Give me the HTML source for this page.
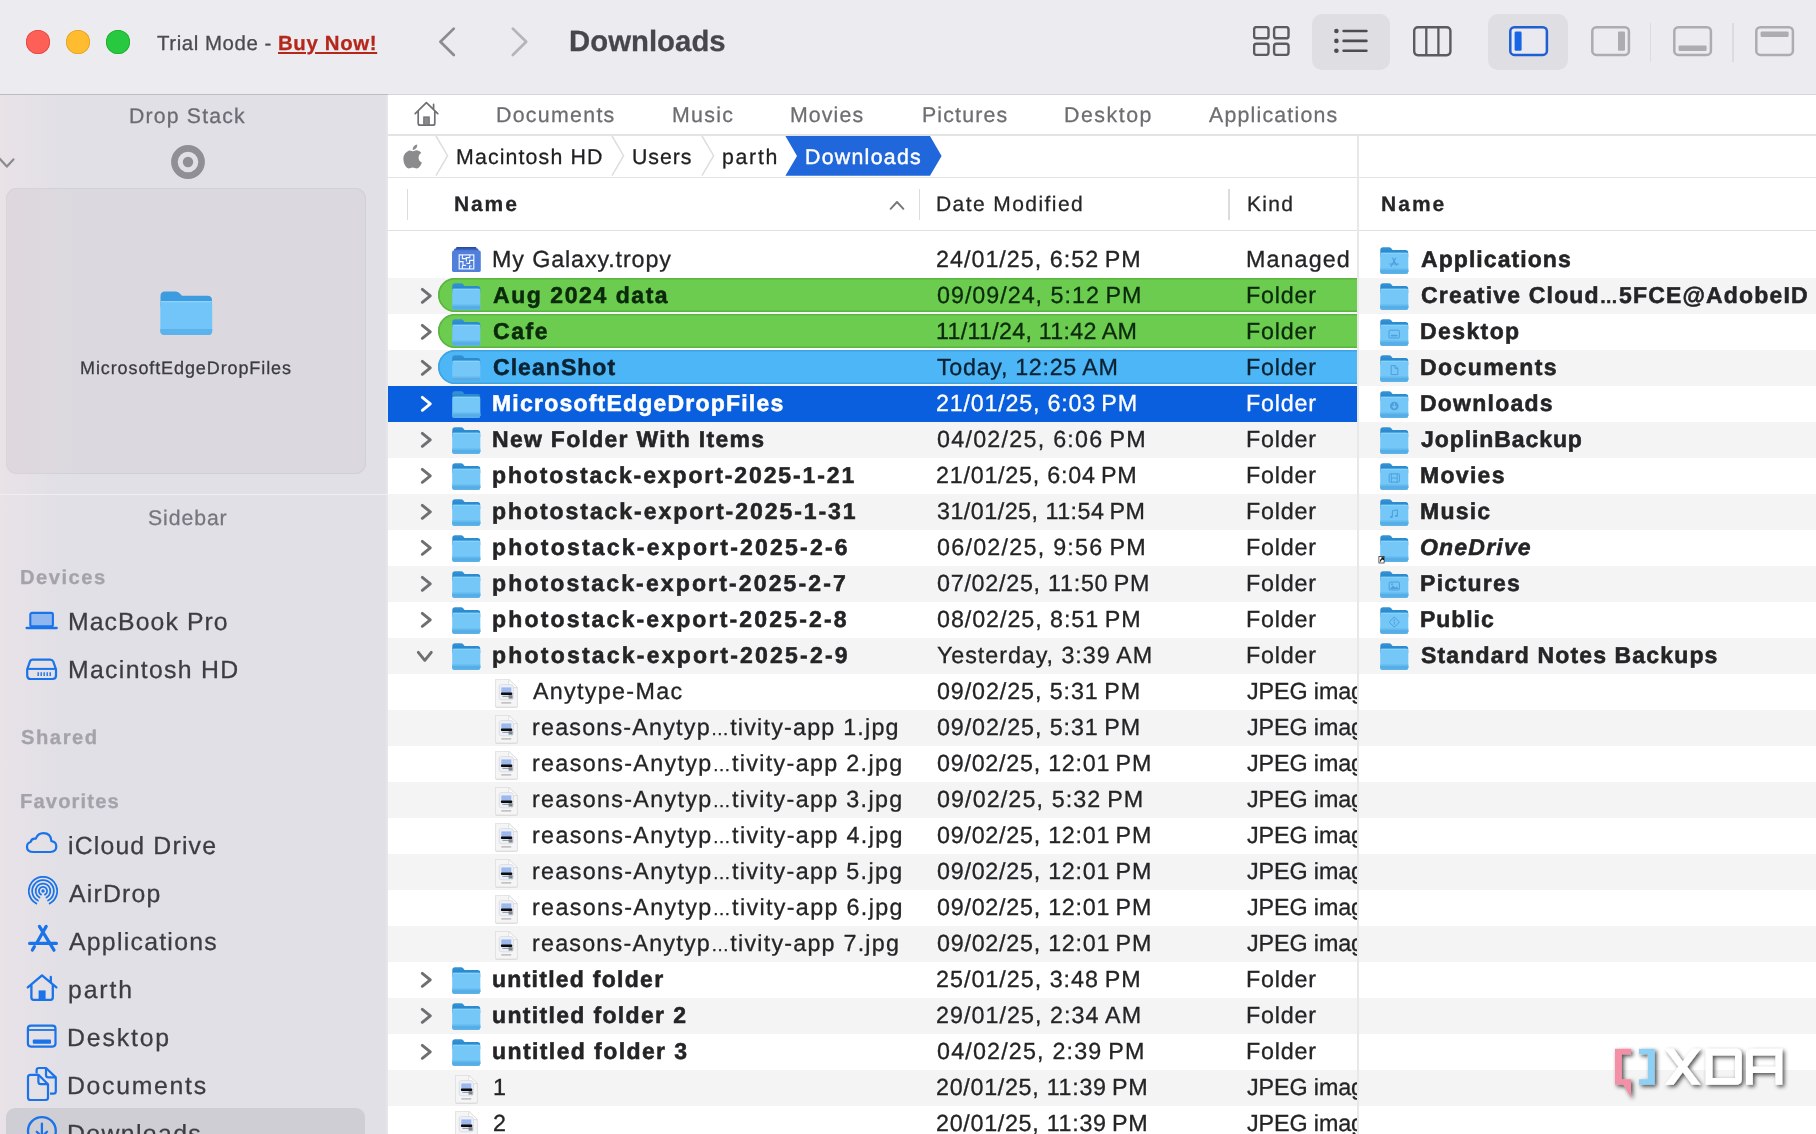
<!DOCTYPE html>
<html lang="en"><head><meta charset="utf-8"><title>Downloads</title>
<style>html,body{margin:0;padding:0;}body{width:1816px;height:1134px;overflow:hidden;position:relative;background:#fff;font-family:"Liberation Sans",sans-serif;}#app{position:absolute;left:0;top:0;width:1816px;height:1134px;overflow:hidden;will-change:transform;}.b{position:absolute;display:block;}.t{position:absolute;white-space:pre;line-height:1;font-family:"Liberation Sans",sans-serif;-webkit-text-stroke-width:.28px;transform:rotate(0.03deg);}</style></head>
<body>
<div id="app">
<svg class="b" width="0" height="0" style="left:0;top:0"><defs><linearGradient id="fb" x1="0" y1="0" x2="0" y2="1"><stop offset="0" stop-color="#3593d6"/><stop offset="1" stop-color="#1f80c6"/></linearGradient></defs></svg>
<div class="b" style="left:0px;top:0px;width:1816px;height:94px;background:#ecebf0;"></div>
<div class="b" style="left:0px;top:94px;width:388px;height:1px;background:#bdbcc4;"></div>
<div class="b" style="left:388px;top:94px;width:1428px;height:1px;background:#d5d4da;"></div>
<div class="b" style="left:0px;top:95px;width:388px;height:1039px;background:#e1e0e6;"></div>
<div class="b" style="left:386px;top:95px;width:2px;height:1039px;background:#e6e5ea;"></div>
<div class="b" style="left:25.8px;top:29.8px;width:24.4px;height:24.4px;background:#fe5f57;border-radius:50%;box-shadow:inset 0 0 0 0.8px #e0443e;"></div>
<div class="b" style="left:65.8px;top:29.8px;width:24.4px;height:24.4px;background:#febc2e;border-radius:50%;box-shadow:inset 0 0 0 0.8px #dea123;"></div>
<div class="b" style="left:105.8px;top:29.8px;width:24.4px;height:24.4px;background:#28c840;border-radius:50%;box-shadow:inset 0 0 0 0.8px #1aab29;"></div>
<span class="t" style="left:157.40px;top:32.79px;font-size:20.4px;letter-spacing:0.58px;color:#4a4a4f;">Trial Mode -</span>
<span class="t" style="left:278.00px;top:32.79px;font-size:20.4px;font-weight:700;letter-spacing:0.65px;color:#b5271b;text-decoration:underline;text-decoration-thickness:2px;text-underline-offset:2px;">Buy Now!</span>
<svg class="b" style="left:436px;top:24px;" width="24" height="36" viewBox="0 0 24 36"><path d="M17.8 4.6 L4.4 17.8 L17.8 31" fill="none" stroke="#8b8b90" stroke-width="2.7" stroke-linecap="round" stroke-linejoin="round"/></svg>
<svg class="b" style="left:508px;top:24px;" width="24" height="36" viewBox="0 0 24 36"><path d="M4.8 4.6 L18.2 17.8 L4.8 31" fill="none" stroke="#b4b4b9" stroke-width="2.7" stroke-linecap="round" stroke-linejoin="round"/></svg>
<span class="t" style="left:568.90px;top:26.49px;font-size:29.3px;font-weight:700;letter-spacing:0.05px;color:#47464d;">Downloads</span>
<div class="b" style="left:1312px;top:14px;width:78px;height:55.5px;background:#dfdee3;border-radius:10px;"></div>
<div class="b" style="left:1488px;top:13.5px;width:80px;height:56.5px;background:#dfdee3;border-radius:10px;"></div>
<svg class="b" style="left:1253px;top:26px;" width="37" height="30" viewBox="0 0 37 30"><rect x="1.1" y="1.1" width="14.4" height="11.2" rx="2.4" fill="none" stroke="#5b5b60" stroke-width="2.4"/><rect x="1.1" y="17.7" width="14.4" height="11.2" rx="2.4" fill="none" stroke="#5b5b60" stroke-width="2.4"/><rect x="21.1" y="1.1" width="14.4" height="11.2" rx="2.4" fill="none" stroke="#5b5b60" stroke-width="2.4"/><rect x="21.1" y="17.7" width="14.4" height="11.2" rx="2.4" fill="none" stroke="#5b5b60" stroke-width="2.4"/></svg>
<svg class="b" style="left:1333.8px;top:28px;" width="35" height="26" viewBox="0 0 35 26"><circle cx="2.4" cy="3" r="2.3" fill="#4c4c51"/><path d="M9.6 3 H32.4" stroke="#4c4c51" stroke-width="2.6" stroke-linecap="round"/><circle cx="2.4" cy="12.9" r="2.3" fill="#4c4c51"/><path d="M9.6 12.9 H32.4" stroke="#4c4c51" stroke-width="2.6" stroke-linecap="round"/><circle cx="2.4" cy="22.8" r="2.3" fill="#4c4c51"/><path d="M9.6 22.8 H32.4" stroke="#4c4c51" stroke-width="2.6" stroke-linecap="round"/></svg>
<svg class="b" style="left:1413px;top:25.5px;" width="39" height="31" viewBox="0 0 39 31"><rect x="1.2" y="1.2" width="36.2" height="28" rx="3.6" fill="none" stroke="#5b5b60" stroke-width="2.4"/><path d="M13.3 1.2 V29.2 M25.4 1.2 V29.2" stroke="#5b5b60" stroke-width="2.3"/></svg>
<svg class="b" style="left:1508.5px;top:25.5px;" width="40" height="31" viewBox="0 0 40 31"><rect x="1.3" y="1.3" width="36.6" height="27.6" rx="4" fill="#e9e9ef" stroke="#1f5fd2" stroke-width="2.5"/><rect x="5.6" y="5.5" width="7" height="19.3" rx="1.4" fill="#1766e6"/></svg>
<svg class="b" style="left:1590.5px;top:25.5px;" width="40" height="31" viewBox="0 0 40 31"><rect x="1.3" y="1.3" width="36.6" height="27.6" rx="4" fill="#ecebf0" stroke="#acacb1" stroke-width="2.5"/><rect x="27" y="5.5" width="7" height="19.3" rx="1.2" fill="#acacb1"/></svg>
<div class="b" style="left:1650px;top:23px;width:1.3px;height:39px;background:#dcdbe0;"></div>
<svg class="b" style="left:1672.5px;top:25.5px;" width="40" height="31" viewBox="0 0 40 31"><rect x="1.3" y="1.3" width="36.6" height="27.6" rx="4" fill="#ecebf0" stroke="#acacb1" stroke-width="2.5"/><rect x="5.6" y="19.4" width="28" height="5.6" rx="1.2" fill="#acacb1"/></svg>
<div class="b" style="left:1732.3px;top:23px;width:1.3px;height:39px;background:#dcdbe0;"></div>
<svg class="b" style="left:1754.5px;top:25.5px;" width="40" height="31" viewBox="0 0 40 31"><rect x="1.3" y="1.3" width="36.6" height="27.6" rx="4" fill="#ecebf0" stroke="#acacb1" stroke-width="2.5"/><rect x="5.6" y="5.4" width="28" height="5.6" rx="1.2" fill="#acacb1"/></svg>
<div class="b" style="left:0px;top:95px;width:60px;height:1039px;background:linear-gradient(90deg,rgba(238,228,232,.6),rgba(225,224,230,0));"></div>
<span class="t" style="left:128.70px;top:104.69px;font-size:21.2px;letter-spacing:1.20px;color:#6c6b73;">Drop Stack</span>
<svg class="b" style="left:0px;top:154px;" width="18" height="18" viewBox="0 0 18 18"><path d="M-0.5 4.6 L6.9 12.6 L13.4 5.4" fill="none" stroke="#8a8a8f" stroke-width="2.2" stroke-linecap="round" stroke-linejoin="round"/></svg>
<svg class="b" style="left:170px;top:144px;" width="36" height="36" viewBox="0 0 36 36"><circle cx="18" cy="18" r="13.6" fill="none" stroke="#8f8f94" stroke-width="6.6"/><circle cx="18" cy="18" r="5.2" fill="#8f8f94"/></svg>
<div class="b" style="left:6px;top:187.5px;width:359.5px;height:286px;background:#dbd9df;border-radius:11px;box-shadow:inset 0 0 0 1px #d2d0d7;"></div>
<div class="b" style="left:6px;top:187.5px;width:70px;height:286px;background:linear-gradient(90deg,rgba(226,214,220,.5),rgba(219,217,223,0));border-radius:11px 0 0 11px;"></div>
<svg class="b" style="left:160px;top:291px;" width="53" height="45" viewBox="0 0 53 45"><path d="M0.5 5 Q0.5 0.5 5 0.5 H15.5 Q18 0.5 19.6 2.2 L22 4.8 H47.5 Q52 4.8 52 9.3 V16 H0.5Z" fill="#3d9cdf"/><path d="M0.3 14 Q0.3 10 4.3 10 H48.2 Q52.2 10 52.2 14 V40 Q52.2 44 48.2 44 H4.3 Q0.3 44 0.3 40Z" fill="#72c5f8"/><path d="M0.3 38 H52.2 V40 Q52.2 44 48.2 44 H4.3 Q0.3 44 0.3 40Z" fill="#5cb2ea"/><rect x="0.3" y="10" width="51.9" height="1.3" rx=".6" fill="#8fd3fb"/></svg>
<span class="t" style="left:79.50px;top:358.89px;font-size:18px;letter-spacing:0.90px;color:#3b3b42;">MicrosoftEdgeDropFiles</span>
<div class="b" style="left:0px;top:494px;width:388px;height:1px;background:#efeef2;"></div>
<span class="t" style="left:147.60px;top:506.89px;font-size:21.2px;letter-spacing:0.94px;color:#77767e;">Sidebar</span>
<span class="t" style="left:20.00px;top:567.49px;font-size:20.2px;font-weight:700;letter-spacing:1.48px;color:#a4a3ab;">Devices</span>
<span class="t" style="left:21.00px;top:727.49px;font-size:20.2px;font-weight:700;letter-spacing:1.54px;color:#a4a3ab;">Shared</span>
<span class="t" style="left:20.00px;top:790.89px;font-size:20.2px;font-weight:700;letter-spacing:1.12px;color:#a4a3ab;">Favorites</span>
<span class="t" style="left:67.70px;top:610.09px;font-size:24.8px;letter-spacing:1.08px;color:#3c3c43;">MacBook Pro</span>
<span class="t" style="left:67.70px;top:658.09px;font-size:24.8px;letter-spacing:1.32px;color:#3c3c43;">Macintosh HD</span>
<div class="b" style="left:6.2px;top:1107.8px;width:359.2px;height:40px;background:#cfced5;border-radius:9px;"></div>
<span class="t" style="left:67.70px;top:834.29px;font-size:24.8px;letter-spacing:1.17px;color:#3c3c43;">iCloud Drive</span>
<span class="t" style="left:68.70px;top:882.29px;font-size:24.8px;letter-spacing:1.21px;color:#3c3c43;">AirDrop</span>
<span class="t" style="left:68.70px;top:930.29px;font-size:24.8px;letter-spacing:1.27px;color:#3c3c43;">Applications</span>
<span class="t" style="left:67.70px;top:978.29px;font-size:24.8px;letter-spacing:1.89px;color:#3c3c43;">parth</span>
<span class="t" style="left:66.70px;top:1026.29px;font-size:24.8px;letter-spacing:1.85px;color:#3c3c43;">Desktop</span>
<span class="t" style="left:66.70px;top:1074.29px;font-size:24.8px;letter-spacing:1.71px;color:#3c3c43;">Documents</span>
<span class="t" style="left:66.70px;top:1122.29px;font-size:24.8px;letter-spacing:1.38px;color:#3c3c43;">Downloads</span>
<svg class="b" style="left:25px;top:610px;" width="34" height="21" viewBox="0 0 34 21"><rect x="5.3" y="2.9" width="22.6" height="13.4" rx="1.6" fill="#8fb6ef" stroke="#1a73e8" stroke-width="2.1"/><path d="M1.6 18 H31.7" stroke="#1a73e8" stroke-width="2.3" stroke-linecap="round"/></svg>
<svg class="b" style="left:26px;top:656.5px;" width="32" height="25" viewBox="0 0 32 25"><path d="M6.8 2.6 H24.2 Q26.4 2.6 27.3 4.6 L30 12.4 V18.6 Q30 22 26.6 22 H4.6 Q1.2 22 1.2 18.6 V12.4 L3.9 4.6 Q4.6 2.6 6.8 2.6Z" fill="none" stroke="#1a73e8" stroke-width="2.2" stroke-linejoin="round"/><path d="M1.8 11.9 H29.4" stroke="#1a73e8" stroke-width="2"/><path d="M12.2 15.2 V19 M15.2 15.2 V19 M18.2 15.2 V19 M21.2 15.2 V19 M24.2 15.2 V19" stroke="#1a73e8" stroke-width="1.4"/></svg>
<svg class="b" style="left:24px;top:829px;" width="36" height="27" viewBox="0 0 36 27"><path d="M9.6 23 H26.4 Q32.3 23 32.3 17.6 Q32.3 12.8 27.4 12.2 Q26.9 4.2 19.4 4.2 Q13.9 4.2 11.8 9.6 Q7.4 9 6.6 13 Q3 13.6 3 18 Q3 23 9.6 23Z" fill="none" stroke="#1a73e8" stroke-width="2.2" stroke-linejoin="round"/></svg>
<svg class="b" style="left:27.9px;top:876.4px;" width="30" height="30" viewBox="0 0 30 30"><path d="M13.08 18.62 A4.1 4.1 0 1 1 16.92 18.62" fill="none" stroke="#1a73e8" stroke-width="1.75" stroke-linecap="round"/><path d="M11.53 21.53 A7.4 7.4 0 1 1 18.47 21.53" fill="none" stroke="#1a73e8" stroke-width="1.75" stroke-linecap="round"/><path d="M9.93 24.54 A10.8 10.8 0 1 1 20.07 24.54" fill="none" stroke="#1a73e8" stroke-width="1.75" stroke-linecap="round"/><path d="M8.34 27.54 A14.2 14.2 0 1 1 21.66 27.54" fill="none" stroke="#1a73e8" stroke-width="1.75" stroke-linecap="round"/><circle cx="15" cy="15" r="1.7" fill="#1a73e8"/></svg>
<svg class="b" style="left:26px;top:923px;" width="34" height="31" viewBox="0 0 34 31"><path d="M20.2 3.4 L10.7 20 M8.4 23.6 L6.4 27 M13.4 3.4 L28 27.2 M3.6 20.4 H30.4" fill="none" stroke="#1a73e8" stroke-width="3.2" stroke-linecap="round"/></svg>
<svg class="b" style="left:25px;top:972px;" width="35" height="31" viewBox="0 0 35 31"><path d="M2.8 15.4 L17 3.4 L31.4 15.4 M25.8 10.6 V5 M6.4 13 V25.6 Q6.4 27.8 8.6 27.8 H25.6 Q27.8 27.8 27.8 25.6 V13" fill="none" stroke="#1a73e8" stroke-width="2.3" stroke-linecap="round" stroke-linejoin="round"/><rect x="13.6" y="18.4" width="7" height="9.4" fill="#1a73e8"/></svg>
<svg class="b" style="left:25px;top:1023px;" width="34" height="27" viewBox="0 0 34 27"><rect x="2.9" y="2.7" width="27.6" height="20.9" rx="3" fill="none" stroke="#1a73e8" stroke-width="2.2"/><path d="M3 7 H30.4" stroke="#1a73e8" stroke-width="1.8"/><rect x="7.8" y="16.6" width="18.2" height="4.2" rx="1" fill="#1a73e8"/></svg>
<svg class="b" style="left:25px;top:1064.5px;" width="34" height="38" viewBox="0 0 34 38"><path d="M11.6 8.5 V5.4 Q11.6 3 14 3 H21 L30.8 12.4 V26.2 Q30.8 28.6 28.4 28.6 H25" fill="none" stroke="#1a73e8" stroke-width="2.2" stroke-linejoin="round"/><path d="M21 3 V10 Q21 12.4 23.4 12.4 H30.8" fill="none" stroke="#1a73e8" stroke-width="2.2"/><path d="M5.4 9.8 H13.4 L23 19.2 V32.6 Q23 35 20.6 35 H5.4 Q3 35 3 32.6 V12.2 Q3 9.8 5.4 9.8Z" fill="none" stroke="#1a73e8" stroke-width="2.2" stroke-linejoin="round"/><path d="M13.4 9.8 V16.8 Q13.4 19.2 15.8 19.2 H23" fill="none" stroke="#1a73e8" stroke-width="2.2"/></svg>
<svg class="b" style="left:25px;top:1114px;" width="34" height="22" viewBox="0 0 34 22"><circle cx="16.9" cy="17" r="13.9" fill="none" stroke="#1a73e8" stroke-width="2.3"/><path d="M16.9 9.6 V22 M11.8 17.8 L16.9 22.8 L22 17.8" fill="none" stroke="#1a73e8" stroke-width="2.3" stroke-linecap="round" stroke-linejoin="round"/></svg>
<div class="b" style="left:388px;top:95px;width:1428px;height:1039px;background:#ffffff;z-index:-1;"></div>
<svg class="b" style="left:413px;top:100px;" width="27" height="28" viewBox="0 0 27 28"><path d="M2.2 13.6 L13.4 2.6 L24.8 13.6 M20.6 9.2 V4.4 M5.2 11.4 V23.2 Q5.2 25.2 7.2 25.2 H19.8 Q21.8 25.2 21.8 23.2 V11.4" fill="none" stroke="#707074" stroke-width="1.7" stroke-linecap="round" stroke-linejoin="round"/><rect x="10.8" y="17" width="5.4" height="8" fill="#8a8a8e" stroke="#707074" stroke-width="1.2"/></svg>
<span class="t" style="left:496.00px;top:104.59px;font-size:21.3px;letter-spacing:1.32px;color:#6d6d72;">Documents</span>
<span class="t" style="left:672.00px;top:104.59px;font-size:21.3px;letter-spacing:1.31px;color:#6d6d72;">Music</span>
<span class="t" style="left:790.00px;top:104.59px;font-size:21.3px;letter-spacing:1.12px;color:#6d6d72;">Movies</span>
<span class="t" style="left:922.00px;top:104.59px;font-size:21.3px;letter-spacing:1.17px;color:#6d6d72;">Pictures</span>
<span class="t" style="left:1063.50px;top:104.59px;font-size:21.3px;letter-spacing:1.54px;color:#6d6d72;">Desktop</span>
<span class="t" style="left:1209.00px;top:104.59px;font-size:21.3px;letter-spacing:1.21px;color:#6d6d72;">Applications</span>
<div class="b" style="left:388px;top:134px;width:1428px;height:1.6px;background:#e3e3e4;"></div>
<svg class="b" style="left:402px;top:143.5px;" width="22" height="26" viewBox="0 0 22 26"><path d="M15.6 1 Q15.9 3.4 14.4 5.2 Q12.9 7 10.8 6.9 Q10.5 4.7 12 3 Q13.5 1.3 15.6 1Z M10.9 8.2 Q12.2 8.2 14.2 7.3 Q17.9 6.9 19.9 10 Q16.9 11.9 17 15.2 Q17.1 18.8 20.6 20.3 Q19.7 22.8 18.3 24.6 Q16.8 26.6 15.1 26.6 Q13.8 26.6 12.9 26.1 Q11.8 25.6 10.8 25.6 Q9.7 25.6 8.6 26.1 Q7.6 26.6 6.8 26.6 Q5 26.6 3.2 24.2 Q0.8 20.9 0.8 16.6 Q0.8 12.7 2.8 10.4 Q4.6 8.3 7 7.4 Q9.2 7.4 10.9 8.2Z" transform="scale(0.94) translate(0.6,-0.6)" fill="#8b8b8d"/></svg>
<svg class="b" style="left:435.3px;top:135px;" width="14" height="42" viewBox="0 0 14 42"><path d="M1 1 L12.6 20.7 L1 40.6" fill="none" stroke="#dedede" stroke-width="1.5"/></svg>
<svg class="b" style="left:611.2px;top:135px;" width="14" height="42" viewBox="0 0 14 42"><path d="M1 1 L12.6 20.7 L1 40.6" fill="none" stroke="#dedede" stroke-width="1.5"/></svg>
<svg class="b" style="left:701.4px;top:135px;" width="14" height="42" viewBox="0 0 14 42"><path d="M1 1 L12.6 20.7 L1 40.6" fill="none" stroke="#dedede" stroke-width="1.5"/></svg>
<span class="t" style="left:456.00px;top:146.59px;font-size:21.3px;letter-spacing:1.15px;color:#1f1f21;">Macintosh HD</span>
<span class="t" style="left:632.20px;top:146.59px;font-size:21.3px;letter-spacing:0.96px;color:#1f1f21;">Users</span>
<span class="t" style="left:721.80px;top:146.59px;font-size:21.3px;letter-spacing:1.70px;color:#1f1f21;">parth</span>
<svg class="b" style="left:785px;top:135.8px;" width="158" height="40" viewBox="0 0 158 40"><path d="M0.4 0 H145 L156.6 19.9 L145 39.8 H0.4 L12 19.9Z" fill="#2067dc"/></svg>
<span class="t" style="left:805.20px;top:146.67px;font-size:21.3px;letter-spacing:1.29px;-webkit-text-stroke-width:0.45px;color:#ffffff;">Downloads</span>
<div class="b" style="left:388px;top:176.8px;width:1428px;height:1.5px;background:#e3e3e4;"></div>
<span class="t" style="left:453.50px;top:193.39px;font-size:21px;font-weight:700;letter-spacing:1.89px;color:#262628;">Name</span>
<span class="t" style="left:936.00px;top:193.29px;font-size:21px;letter-spacing:1.43px;color:#262628;">Date Modified</span>
<span class="t" style="left:1246.70px;top:193.29px;font-size:21px;letter-spacing:1.32px;color:#262628;">Kind</span>
<span class="t" style="left:1381.00px;top:193.39px;font-size:21px;font-weight:700;letter-spacing:2.03px;color:#262628;">Name</span>
<svg class="b" style="left:888px;top:198px;" width="18" height="14" viewBox="0 0 18 14"><path d="M2.6 10.8 L9 4 L15.4 10.8" fill="none" stroke="#77777a" stroke-width="1.9" stroke-linecap="round" stroke-linejoin="round"/></svg>
<div class="b" style="left:406.5px;top:188.5px;width:1.4px;height:31px;background:#dcdcdd;"></div>
<div class="b" style="left:918.7px;top:188.5px;width:1.4px;height:31px;background:#dcdcdd;"></div>
<div class="b" style="left:1228.2px;top:188.5px;width:1.4px;height:31px;background:#dcdcdd;"></div>
<div class="b" style="left:388px;top:229.8px;width:1428px;height:1.6px;background:#e0e0e1;"></div>
<div class="b" style="left:388px;top:278px;width:1428px;height:36px;background:#f4f4f5;"></div>
<div class="b" style="left:388px;top:350px;width:1428px;height:36px;background:#f4f4f5;"></div>
<div class="b" style="left:388px;top:422px;width:1428px;height:36px;background:#f4f4f5;"></div>
<div class="b" style="left:388px;top:494px;width:1428px;height:36px;background:#f4f4f5;"></div>
<div class="b" style="left:388px;top:566px;width:1428px;height:36px;background:#f4f4f5;"></div>
<div class="b" style="left:388px;top:638px;width:1428px;height:36px;background:#f4f4f5;"></div>
<div class="b" style="left:388px;top:710px;width:1428px;height:36px;background:#f4f4f5;"></div>
<div class="b" style="left:388px;top:782px;width:1428px;height:36px;background:#f4f4f5;"></div>
<div class="b" style="left:388px;top:854px;width:1428px;height:36px;background:#f4f4f5;"></div>
<div class="b" style="left:388px;top:926px;width:1428px;height:36px;background:#f4f4f5;"></div>
<div class="b" style="left:388px;top:998px;width:1428px;height:36px;background:#f4f4f5;"></div>
<div class="b" style="left:388px;top:1070px;width:1428px;height:36px;background:#f4f4f5;"></div>
<div class="b" style="left:388px;top:1142px;width:1428px;height:36px;background:#f4f4f5;"></div>
<div class="b" style="left:388px;top:95px;width:969.5px;height:1039px;overflow:hidden;"><div class="b" style="left:-388px;top:-95px;">
<svg class="b" style="left:452.2px;top:246.9px;" width="29" height="25" viewBox="0 0 29 25"><path d="M4 1.2 Q4 0 5.2 0 H23.3 Q24.5 0 24.5 1.2 V4 H4Z" fill="#2b4a9a"/><path d="M2 3 Q2 1.6 3.4 1.6 H25.1 Q26.5 1.6 26.5 3 V6 H2Z" fill="#3c62bd"/><path d="M0 5.6 Q0 3.2 2.4 3.2 H26.4 Q28.8 3.2 28.8 5.6 V23.6 Q28.8 25 27.4 25 H1.4 Q0 25 0 23.6Z" fill="#5080dc"/><g fill="none" stroke="#f4f7ff" stroke-width="1.15"><rect x="7.2" y="7.9" width="14.6" height="14"/><path d="M10.4 7.9 V11.6 H14.2 M17.8 7.9 V10.6 H14.4 V14.6 M21.8 13.4 H17.6 V16.4 H14.4 M7.2 14.6 H11 V18.4 H14.2 M10.4 21.9 V18.6 M17.6 21.9 V19 H19.8"/></g></svg>
<span class="t" style="left:492.30px;top:248.30px;font-size:23.3px;letter-spacing:0.88px;-webkit-text-stroke-width:0.3px;color:#242426;">My Galaxy.tropy</span>
<span class="t" style="left:936.20px;top:248.30px;font-size:23.3px;letter-spacing:1.01px;-webkit-text-stroke-width:0.3px;color:#242426;">24/01/25, 6:52 PM</span>
<span class="t" style="left:1246.20px;top:248.30px;font-size:23.3px;letter-spacing:1.10px;-webkit-text-stroke-width:0.3px;color:#242426;">Managed</span>
<div class="b" style="left:438px;top:278px;width:940px;height:33.6px;background:#6ccc4f;border-radius:17px;box-shadow:inset 0 0 0 1.6px #5ab540;"></div>
<svg class="b" style="left:419px;top:285.8px;" width="15" height="20" viewBox="0 0 15 20"><path d="M3.3 3.3 L11.3 9.8 L3.3 16.3" fill="none" stroke="#6f6f72" stroke-width="2.9" stroke-linecap="round" stroke-linejoin="round"/></svg>
<svg class="b" style="left:451.6px;top:283.0px;overflow:visible;" width="28.5" height="28.5" viewBox="0 0 28.5 28.5"><path d="M0.3 3 Q0.3 0.2 3.1 0.2 H9 Q10.4 0.2 11.2 1.3 L12.6 3 H25.6 Q28.2 3 28.2 5.6 V10 H0.3Z" fill="url(#fb)"/><path d="M0.2 7.9 Q0.2 5.7 2.4 5.7 H26.1 Q28.3 5.7 28.3 7.9 V24.6 Q28.3 26.8 26.1 26.8 H2.4 Q0.2 26.8 0.2 24.6Z" fill="#74c7f7"/><path d="M0.2 21.4 H28.3 V24.6 Q28.3 26.8 26.1 26.8 H2.4 Q0.2 26.8 0.2 24.6Z" fill="#63baee"/><path d="M0.2 23 H28.3 V24.6 Q28.3 26.8 26.1 26.8 H2.4 Q0.2 26.8 0.2 24.6Z" fill="#57aee6"/><rect x="0.5" y="5.7" width="27.5" height="1" rx="0.5" fill="#8dd6fb"/></svg>
<span class="t" style="left:492.80px;top:284.42px;font-size:23.0px;font-weight:700;letter-spacing:1.56px;-webkit-text-stroke-width:0.55px;color:#0b2a0c;">Aug 2024 data</span>
<span class="t" style="left:937.20px;top:284.30px;font-size:23.3px;letter-spacing:0.99px;-webkit-text-stroke-width:0.3px;color:#0b2a0c;">09/09/24, 5:12 PM</span>
<span class="t" style="left:1246.20px;top:284.30px;font-size:23.3px;letter-spacing:0.80px;-webkit-text-stroke-width:0.3px;color:#0b2a0c;">Folder</span>
<div class="b" style="left:438px;top:314px;width:940px;height:33.6px;background:#6ccc4f;border-radius:17px;box-shadow:inset 0 0 0 1.6px #5ab540;"></div>
<svg class="b" style="left:419px;top:321.8px;" width="15" height="20" viewBox="0 0 15 20"><path d="M3.3 3.3 L11.3 9.8 L3.3 16.3" fill="none" stroke="#6f6f72" stroke-width="2.9" stroke-linecap="round" stroke-linejoin="round"/></svg>
<svg class="b" style="left:451.6px;top:319.0px;overflow:visible;" width="28.5" height="28.5" viewBox="0 0 28.5 28.5"><path d="M0.3 3 Q0.3 0.2 3.1 0.2 H9 Q10.4 0.2 11.2 1.3 L12.6 3 H25.6 Q28.2 3 28.2 5.6 V10 H0.3Z" fill="url(#fb)"/><path d="M0.2 7.9 Q0.2 5.7 2.4 5.7 H26.1 Q28.3 5.7 28.3 7.9 V24.6 Q28.3 26.8 26.1 26.8 H2.4 Q0.2 26.8 0.2 24.6Z" fill="#74c7f7"/><path d="M0.2 21.4 H28.3 V24.6 Q28.3 26.8 26.1 26.8 H2.4 Q0.2 26.8 0.2 24.6Z" fill="#63baee"/><path d="M0.2 23 H28.3 V24.6 Q28.3 26.8 26.1 26.8 H2.4 Q0.2 26.8 0.2 24.6Z" fill="#57aee6"/><rect x="0.5" y="5.7" width="27.5" height="1" rx="0.5" fill="#8dd6fb"/></svg>
<span class="t" style="left:492.80px;top:320.42px;font-size:23.0px;font-weight:700;letter-spacing:1.55px;-webkit-text-stroke-width:0.55px;color:#0b2a0c;">Cafe</span>
<span class="t" style="left:936.20px;top:320.30px;font-size:23.3px;letter-spacing:0.27px;-webkit-text-stroke-width:0.3px;color:#0b2a0c;">11/11/24, 11:42 AM</span>
<span class="t" style="left:1246.20px;top:320.30px;font-size:23.3px;letter-spacing:0.80px;-webkit-text-stroke-width:0.3px;color:#0b2a0c;">Folder</span>
<div class="b" style="left:438px;top:350px;width:940px;height:33.6px;background:#4db6f6;border-radius:17px;box-shadow:inset 0 0 0 1.6px #3da3e4;"></div>
<svg class="b" style="left:419px;top:357.8px;" width="15" height="20" viewBox="0 0 15 20"><path d="M3.3 3.3 L11.3 9.8 L3.3 16.3" fill="none" stroke="#6f6f72" stroke-width="2.9" stroke-linecap="round" stroke-linejoin="round"/></svg>
<svg class="b" style="left:451.6px;top:355.0px;overflow:visible;" width="28.5" height="28.5" viewBox="0 0 28.5 28.5"><path d="M0.3 3 Q0.3 0.2 3.1 0.2 H9 Q10.4 0.2 11.2 1.3 L12.6 3 H25.6 Q28.2 3 28.2 5.6 V10 H0.3Z" fill="url(#fb)"/><path d="M0.2 7.9 Q0.2 5.7 2.4 5.7 H26.1 Q28.3 5.7 28.3 7.9 V24.6 Q28.3 26.8 26.1 26.8 H2.4 Q0.2 26.8 0.2 24.6Z" fill="#74c7f7"/><path d="M0.2 21.4 H28.3 V24.6 Q28.3 26.8 26.1 26.8 H2.4 Q0.2 26.8 0.2 24.6Z" fill="#63baee"/><path d="M0.2 23 H28.3 V24.6 Q28.3 26.8 26.1 26.8 H2.4 Q0.2 26.8 0.2 24.6Z" fill="#57aee6"/><rect x="0.5" y="5.7" width="27.5" height="1" rx="0.5" fill="#8dd6fb"/></svg>
<span class="t" style="left:492.80px;top:356.42px;font-size:23.0px;font-weight:700;letter-spacing:1.05px;-webkit-text-stroke-width:0.55px;color:#0a2233;">CleanShot</span>
<span class="t" style="left:937.20px;top:356.30px;font-size:23.3px;letter-spacing:0.69px;-webkit-text-stroke-width:0.3px;color:#0a2233;">Today, 12:25 AM</span>
<span class="t" style="left:1246.20px;top:356.30px;font-size:23.3px;letter-spacing:0.80px;-webkit-text-stroke-width:0.3px;color:#0a2233;">Folder</span>
<div class="b" style="left:388px;top:386px;width:980px;height:35.8px;background:#0a5fdf;"></div>
<svg class="b" style="left:419px;top:393.8px;" width="15" height="20" viewBox="0 0 15 20"><path d="M3.3 3.3 L11.3 9.8 L3.3 16.3" fill="none" stroke="#ffffff" stroke-width="2.9" stroke-linecap="round" stroke-linejoin="round"/></svg>
<svg class="b" style="left:451.6px;top:391.0px;overflow:visible;" width="28.5" height="28.5" viewBox="0 0 28.5 28.5"><path d="M0.3 3 Q0.3 0.2 3.1 0.2 H9 Q10.4 0.2 11.2 1.3 L12.6 3 H25.6 Q28.2 3 28.2 5.6 V10 H0.3Z" fill="url(#fb)"/><path d="M0.2 7.9 Q0.2 5.7 2.4 5.7 H26.1 Q28.3 5.7 28.3 7.9 V24.6 Q28.3 26.8 26.1 26.8 H2.4 Q0.2 26.8 0.2 24.6Z" fill="#74c7f7"/><path d="M0.2 21.4 H28.3 V24.6 Q28.3 26.8 26.1 26.8 H2.4 Q0.2 26.8 0.2 24.6Z" fill="#63baee"/><path d="M0.2 23 H28.3 V24.6 Q28.3 26.8 26.1 26.8 H2.4 Q0.2 26.8 0.2 24.6Z" fill="#57aee6"/><rect x="0.5" y="5.7" width="27.5" height="1" rx="0.5" fill="#8dd6fb"/></svg>
<span class="t" style="left:491.80px;top:392.42px;font-size:23.0px;font-weight:700;letter-spacing:1.21px;-webkit-text-stroke-width:0.55px;color:#ffffff;">MicrosoftEdgeDropFiles</span>
<span class="t" style="left:936.20px;top:392.30px;font-size:23.3px;letter-spacing:0.78px;-webkit-text-stroke-width:0.3px;color:#ffffff;">21/01/25, 6:03 PM</span>
<span class="t" style="left:1246.20px;top:392.30px;font-size:23.3px;letter-spacing:0.80px;-webkit-text-stroke-width:0.3px;color:#ffffff;">Folder</span>
<svg class="b" style="left:419px;top:429.8px;" width="15" height="20" viewBox="0 0 15 20"><path d="M3.3 3.3 L11.3 9.8 L3.3 16.3" fill="none" stroke="#6f6f72" stroke-width="2.9" stroke-linecap="round" stroke-linejoin="round"/></svg>
<svg class="b" style="left:451.6px;top:427.0px;overflow:visible;" width="28.5" height="28.5" viewBox="0 0 28.5 28.5"><path d="M0.3 3 Q0.3 0.2 3.1 0.2 H9 Q10.4 0.2 11.2 1.3 L12.6 3 H25.6 Q28.2 3 28.2 5.6 V10 H0.3Z" fill="url(#fb)"/><path d="M0.2 7.9 Q0.2 5.7 2.4 5.7 H26.1 Q28.3 5.7 28.3 7.9 V24.6 Q28.3 26.8 26.1 26.8 H2.4 Q0.2 26.8 0.2 24.6Z" fill="#74c7f7"/><path d="M0.2 21.4 H28.3 V24.6 Q28.3 26.8 26.1 26.8 H2.4 Q0.2 26.8 0.2 24.6Z" fill="#63baee"/><path d="M0.2 23 H28.3 V24.6 Q28.3 26.8 26.1 26.8 H2.4 Q0.2 26.8 0.2 24.6Z" fill="#57aee6"/><rect x="0.5" y="5.7" width="27.5" height="1" rx="0.5" fill="#8dd6fb"/></svg>
<span class="t" style="left:491.80px;top:428.42px;font-size:23.0px;font-weight:700;letter-spacing:1.28px;-webkit-text-stroke-width:0.55px;color:#242426;">New Folder With Items</span>
<span class="t" style="left:937.20px;top:428.30px;font-size:23.3px;letter-spacing:1.25px;-webkit-text-stroke-width:0.3px;color:#242426;">04/02/25, 6:06 PM</span>
<span class="t" style="left:1246.20px;top:428.30px;font-size:23.3px;letter-spacing:0.80px;-webkit-text-stroke-width:0.3px;color:#242426;">Folder</span>
<svg class="b" style="left:419px;top:465.8px;" width="15" height="20" viewBox="0 0 15 20"><path d="M3.3 3.3 L11.3 9.8 L3.3 16.3" fill="none" stroke="#6f6f72" stroke-width="2.9" stroke-linecap="round" stroke-linejoin="round"/></svg>
<svg class="b" style="left:451.6px;top:463.0px;overflow:visible;" width="28.5" height="28.5" viewBox="0 0 28.5 28.5"><path d="M0.3 3 Q0.3 0.2 3.1 0.2 H9 Q10.4 0.2 11.2 1.3 L12.6 3 H25.6 Q28.2 3 28.2 5.6 V10 H0.3Z" fill="url(#fb)"/><path d="M0.2 7.9 Q0.2 5.7 2.4 5.7 H26.1 Q28.3 5.7 28.3 7.9 V24.6 Q28.3 26.8 26.1 26.8 H2.4 Q0.2 26.8 0.2 24.6Z" fill="#74c7f7"/><path d="M0.2 21.4 H28.3 V24.6 Q28.3 26.8 26.1 26.8 H2.4 Q0.2 26.8 0.2 24.6Z" fill="#63baee"/><path d="M0.2 23 H28.3 V24.6 Q28.3 26.8 26.1 26.8 H2.4 Q0.2 26.8 0.2 24.6Z" fill="#57aee6"/><rect x="0.5" y="5.7" width="27.5" height="1" rx="0.5" fill="#8dd6fb"/></svg>
<span class="t" style="left:491.80px;top:464.42px;font-size:23.0px;font-weight:700;letter-spacing:1.89px;-webkit-text-stroke-width:0.55px;color:#242426;">photostack-export-2025-1-21</span>
<span class="t" style="left:936.20px;top:464.30px;font-size:23.3px;letter-spacing:0.76px;-webkit-text-stroke-width:0.3px;color:#242426;">21/01/25, 6:04 PM</span>
<span class="t" style="left:1246.20px;top:464.30px;font-size:23.3px;letter-spacing:0.80px;-webkit-text-stroke-width:0.3px;color:#242426;">Folder</span>
<svg class="b" style="left:419px;top:501.8px;" width="15" height="20" viewBox="0 0 15 20"><path d="M3.3 3.3 L11.3 9.8 L3.3 16.3" fill="none" stroke="#6f6f72" stroke-width="2.9" stroke-linecap="round" stroke-linejoin="round"/></svg>
<svg class="b" style="left:451.6px;top:499.0px;overflow:visible;" width="28.5" height="28.5" viewBox="0 0 28.5 28.5"><path d="M0.3 3 Q0.3 0.2 3.1 0.2 H9 Q10.4 0.2 11.2 1.3 L12.6 3 H25.6 Q28.2 3 28.2 5.6 V10 H0.3Z" fill="url(#fb)"/><path d="M0.2 7.9 Q0.2 5.7 2.4 5.7 H26.1 Q28.3 5.7 28.3 7.9 V24.6 Q28.3 26.8 26.1 26.8 H2.4 Q0.2 26.8 0.2 24.6Z" fill="#74c7f7"/><path d="M0.2 21.4 H28.3 V24.6 Q28.3 26.8 26.1 26.8 H2.4 Q0.2 26.8 0.2 24.6Z" fill="#63baee"/><path d="M0.2 23 H28.3 V24.6 Q28.3 26.8 26.1 26.8 H2.4 Q0.2 26.8 0.2 24.6Z" fill="#57aee6"/><rect x="0.5" y="5.7" width="27.5" height="1" rx="0.5" fill="#8dd6fb"/></svg>
<span class="t" style="left:491.80px;top:500.42px;font-size:23.0px;font-weight:700;letter-spacing:1.94px;-webkit-text-stroke-width:0.55px;color:#242426;">photostack-export-2025-1-31</span>
<span class="t" style="left:937.20px;top:500.30px;font-size:23.3px;letter-spacing:0.48px;-webkit-text-stroke-width:0.3px;color:#242426;">31/01/25, 11:54 PM</span>
<span class="t" style="left:1246.20px;top:500.30px;font-size:23.3px;letter-spacing:0.80px;-webkit-text-stroke-width:0.3px;color:#242426;">Folder</span>
<svg class="b" style="left:419px;top:537.8px;" width="15" height="20" viewBox="0 0 15 20"><path d="M3.3 3.3 L11.3 9.8 L3.3 16.3" fill="none" stroke="#6f6f72" stroke-width="2.9" stroke-linecap="round" stroke-linejoin="round"/></svg>
<svg class="b" style="left:451.6px;top:535.0px;overflow:visible;" width="28.5" height="28.5" viewBox="0 0 28.5 28.5"><path d="M0.3 3 Q0.3 0.2 3.1 0.2 H9 Q10.4 0.2 11.2 1.3 L12.6 3 H25.6 Q28.2 3 28.2 5.6 V10 H0.3Z" fill="url(#fb)"/><path d="M0.2 7.9 Q0.2 5.7 2.4 5.7 H26.1 Q28.3 5.7 28.3 7.9 V24.6 Q28.3 26.8 26.1 26.8 H2.4 Q0.2 26.8 0.2 24.6Z" fill="#74c7f7"/><path d="M0.2 21.4 H28.3 V24.6 Q28.3 26.8 26.1 26.8 H2.4 Q0.2 26.8 0.2 24.6Z" fill="#63baee"/><path d="M0.2 23 H28.3 V24.6 Q28.3 26.8 26.1 26.8 H2.4 Q0.2 26.8 0.2 24.6Z" fill="#57aee6"/><rect x="0.5" y="5.7" width="27.5" height="1" rx="0.5" fill="#8dd6fb"/></svg>
<span class="t" style="left:491.80px;top:536.42px;font-size:23.0px;font-weight:700;letter-spacing:2.21px;-webkit-text-stroke-width:0.55px;color:#242426;">photostack-export-2025-2-6</span>
<span class="t" style="left:937.20px;top:536.30px;font-size:23.3px;letter-spacing:1.25px;-webkit-text-stroke-width:0.3px;color:#242426;">06/02/25, 9:56 PM</span>
<span class="t" style="left:1246.20px;top:536.30px;font-size:23.3px;letter-spacing:0.80px;-webkit-text-stroke-width:0.3px;color:#242426;">Folder</span>
<svg class="b" style="left:419px;top:573.8px;" width="15" height="20" viewBox="0 0 15 20"><path d="M3.3 3.3 L11.3 9.8 L3.3 16.3" fill="none" stroke="#6f6f72" stroke-width="2.9" stroke-linecap="round" stroke-linejoin="round"/></svg>
<svg class="b" style="left:451.6px;top:571.0px;overflow:visible;" width="28.5" height="28.5" viewBox="0 0 28.5 28.5"><path d="M0.3 3 Q0.3 0.2 3.1 0.2 H9 Q10.4 0.2 11.2 1.3 L12.6 3 H25.6 Q28.2 3 28.2 5.6 V10 H0.3Z" fill="url(#fb)"/><path d="M0.2 7.9 Q0.2 5.7 2.4 5.7 H26.1 Q28.3 5.7 28.3 7.9 V24.6 Q28.3 26.8 26.1 26.8 H2.4 Q0.2 26.8 0.2 24.6Z" fill="#74c7f7"/><path d="M0.2 21.4 H28.3 V24.6 Q28.3 26.8 26.1 26.8 H2.4 Q0.2 26.8 0.2 24.6Z" fill="#63baee"/><path d="M0.2 23 H28.3 V24.6 Q28.3 26.8 26.1 26.8 H2.4 Q0.2 26.8 0.2 24.6Z" fill="#57aee6"/><rect x="0.5" y="5.7" width="27.5" height="1" rx="0.5" fill="#8dd6fb"/></svg>
<span class="t" style="left:491.80px;top:572.42px;font-size:23.0px;font-weight:700;letter-spacing:2.14px;-webkit-text-stroke-width:0.55px;color:#242426;">photostack-export-2025-2-7</span>
<span class="t" style="left:937.20px;top:572.30px;font-size:23.3px;letter-spacing:0.74px;-webkit-text-stroke-width:0.3px;color:#242426;">07/02/25, 11:50 PM</span>
<span class="t" style="left:1246.20px;top:572.30px;font-size:23.3px;letter-spacing:0.80px;-webkit-text-stroke-width:0.3px;color:#242426;">Folder</span>
<svg class="b" style="left:419px;top:609.8px;" width="15" height="20" viewBox="0 0 15 20"><path d="M3.3 3.3 L11.3 9.8 L3.3 16.3" fill="none" stroke="#6f6f72" stroke-width="2.9" stroke-linecap="round" stroke-linejoin="round"/></svg>
<svg class="b" style="left:451.6px;top:607.0px;overflow:visible;" width="28.5" height="28.5" viewBox="0 0 28.5 28.5"><path d="M0.3 3 Q0.3 0.2 3.1 0.2 H9 Q10.4 0.2 11.2 1.3 L12.6 3 H25.6 Q28.2 3 28.2 5.6 V10 H0.3Z" fill="url(#fb)"/><path d="M0.2 7.9 Q0.2 5.7 2.4 5.7 H26.1 Q28.3 5.7 28.3 7.9 V24.6 Q28.3 26.8 26.1 26.8 H2.4 Q0.2 26.8 0.2 24.6Z" fill="#74c7f7"/><path d="M0.2 21.4 H28.3 V24.6 Q28.3 26.8 26.1 26.8 H2.4 Q0.2 26.8 0.2 24.6Z" fill="#63baee"/><path d="M0.2 23 H28.3 V24.6 Q28.3 26.8 26.1 26.8 H2.4 Q0.2 26.8 0.2 24.6Z" fill="#57aee6"/><rect x="0.5" y="5.7" width="27.5" height="1" rx="0.5" fill="#8dd6fb"/></svg>
<span class="t" style="left:491.80px;top:608.42px;font-size:23.0px;font-weight:700;letter-spacing:2.17px;-webkit-text-stroke-width:0.55px;color:#242426;">photostack-export-2025-2-8</span>
<span class="t" style="left:937.20px;top:608.30px;font-size:23.3px;letter-spacing:0.94px;-webkit-text-stroke-width:0.3px;color:#242426;">08/02/25, 8:51 PM</span>
<span class="t" style="left:1246.20px;top:608.30px;font-size:23.3px;letter-spacing:0.80px;-webkit-text-stroke-width:0.3px;color:#242426;">Folder</span>
<svg class="b" style="left:415px;top:649px;" width="20" height="15" viewBox="0 0 20 15"><path d="M3.3 3.3 L9.8 11.3 L16.3 3.3" fill="none" stroke="#6f6f72" stroke-width="2.9" stroke-linecap="round" stroke-linejoin="round"/></svg>
<svg class="b" style="left:451.6px;top:643.0px;overflow:visible;" width="28.5" height="28.5" viewBox="0 0 28.5 28.5"><path d="M0.3 3 Q0.3 0.2 3.1 0.2 H9 Q10.4 0.2 11.2 1.3 L12.6 3 H25.6 Q28.2 3 28.2 5.6 V10 H0.3Z" fill="url(#fb)"/><path d="M0.2 7.9 Q0.2 5.7 2.4 5.7 H26.1 Q28.3 5.7 28.3 7.9 V24.6 Q28.3 26.8 26.1 26.8 H2.4 Q0.2 26.8 0.2 24.6Z" fill="#74c7f7"/><path d="M0.2 21.4 H28.3 V24.6 Q28.3 26.8 26.1 26.8 H2.4 Q0.2 26.8 0.2 24.6Z" fill="#63baee"/><path d="M0.2 23 H28.3 V24.6 Q28.3 26.8 26.1 26.8 H2.4 Q0.2 26.8 0.2 24.6Z" fill="#57aee6"/><rect x="0.5" y="5.7" width="27.5" height="1" rx="0.5" fill="#8dd6fb"/></svg>
<span class="t" style="left:491.80px;top:644.42px;font-size:23.0px;font-weight:700;letter-spacing:2.21px;-webkit-text-stroke-width:0.55px;color:#242426;">photostack-export-2025-2-9</span>
<span class="t" style="left:937.20px;top:644.30px;font-size:23.3px;letter-spacing:0.95px;-webkit-text-stroke-width:0.3px;color:#242426;">Yesterday, 3:39 AM</span>
<span class="t" style="left:1246.20px;top:644.30px;font-size:23.3px;letter-spacing:0.80px;-webkit-text-stroke-width:0.3px;color:#242426;">Folder</span>
<svg class="b" style="left:494.9px;top:678.7px;" width="23.5" height="29.5" viewBox="0 0 23.5 29.5"><path d="M1.2 28.6 H21.8" stroke="#d6d6d6" stroke-width="1.2" opacity=".7"/><path d="M0.4 0.4 H13.8 L22.4 8.6 V28 H0.4Z" fill="#f5f5f5" stroke="#dadada" stroke-width="0.8"/><path d="M13.8 0.4 V8.6 H22.4Z" fill="#ffffff" stroke="#d4d4d4" stroke-width="0.7"/><rect x="4.2" y="5.6" width="14.2" height="15.2" rx="2.4" fill="#edf0f6" stroke="#cdd2db" stroke-width="0.6"/><rect x="6.3" y="8.4" width="10" height="5.6" fill="#9db8ec"/><rect x="5.9" y="13.4" width="11.4" height="2.5" rx="1" fill="#0c0c10"/><rect x="7.4" y="16.8" width="9.4" height="1.2" fill="#9aa0a8"/><rect x="13.6" y="16.2" width="4" height="3.4" fill="#7c848e"/><rect x="6.3" y="23" width="9.9" height="1.7" fill="#c2c2c2"/></svg>
<span class="t" style="left:533.00px;top:680.30px;font-size:23.3px;letter-spacing:1.31px;-webkit-text-stroke-width:0.3px;color:#242426;">Anytype-Mac</span>
<span class="t" style="left:937.20px;top:680.30px;font-size:23.3px;letter-spacing:0.91px;-webkit-text-stroke-width:0.3px;color:#242426;">09/02/25, 5:31 PM</span>
<span class="t" style="left:1247.20px;top:680.30px;font-size:23.3px;letter-spacing:-0.10px;-webkit-text-stroke-width:0.3px;color:#242426;">JPEG image</span>
<svg class="b" style="left:494.9px;top:714.7px;" width="23.5" height="29.5" viewBox="0 0 23.5 29.5"><path d="M1.2 28.6 H21.8" stroke="#d6d6d6" stroke-width="1.2" opacity=".7"/><path d="M0.4 0.4 H13.8 L22.4 8.6 V28 H0.4Z" fill="#f5f5f5" stroke="#dadada" stroke-width="0.8"/><path d="M13.8 0.4 V8.6 H22.4Z" fill="#ffffff" stroke="#d4d4d4" stroke-width="0.7"/><rect x="4.2" y="5.6" width="14.2" height="15.2" rx="2.4" fill="#edf0f6" stroke="#cdd2db" stroke-width="0.6"/><rect x="6.3" y="8.4" width="10" height="5.6" fill="#9db8ec"/><rect x="5.9" y="13.4" width="11.4" height="2.5" rx="1" fill="#0c0c10"/><rect x="7.4" y="16.8" width="9.4" height="1.2" fill="#9aa0a8"/><rect x="13.6" y="16.2" width="4" height="3.4" fill="#7c848e"/><rect x="6.3" y="23" width="9.9" height="1.7" fill="#c2c2c2"/></svg>
<span class="t" style="left:532.00px;top:716.30px;font-size:23.3px;letter-spacing:1.21px;-webkit-text-stroke-width:0.3px;color:#242426;">reasons-Anytyp<span style="font-size:0.78em">…</span>tivity-app 1.jpg</span>
<span class="t" style="left:937.20px;top:716.30px;font-size:23.3px;letter-spacing:0.91px;-webkit-text-stroke-width:0.3px;color:#242426;">09/02/25, 5:31 PM</span>
<span class="t" style="left:1247.20px;top:716.30px;font-size:23.3px;letter-spacing:-0.10px;-webkit-text-stroke-width:0.3px;color:#242426;">JPEG image</span>
<svg class="b" style="left:494.9px;top:750.7px;" width="23.5" height="29.5" viewBox="0 0 23.5 29.5"><path d="M1.2 28.6 H21.8" stroke="#d6d6d6" stroke-width="1.2" opacity=".7"/><path d="M0.4 0.4 H13.8 L22.4 8.6 V28 H0.4Z" fill="#f5f5f5" stroke="#dadada" stroke-width="0.8"/><path d="M13.8 0.4 V8.6 H22.4Z" fill="#ffffff" stroke="#d4d4d4" stroke-width="0.7"/><rect x="4.2" y="5.6" width="14.2" height="15.2" rx="2.4" fill="#edf0f6" stroke="#cdd2db" stroke-width="0.6"/><rect x="6.3" y="8.4" width="10" height="5.6" fill="#9db8ec"/><rect x="5.9" y="13.4" width="11.4" height="2.5" rx="1" fill="#0c0c10"/><rect x="7.4" y="16.8" width="9.4" height="1.2" fill="#9aa0a8"/><rect x="13.6" y="16.2" width="4" height="3.4" fill="#7c848e"/><rect x="6.3" y="23" width="9.9" height="1.7" fill="#c2c2c2"/></svg>
<span class="t" style="left:532.00px;top:752.30px;font-size:23.3px;letter-spacing:1.33px;-webkit-text-stroke-width:0.3px;color:#242426;">reasons-Anytyp<span style="font-size:0.78em">…</span>tivity-app 2.jpg</span>
<span class="t" style="left:937.20px;top:752.30px;font-size:23.3px;letter-spacing:0.75px;-webkit-text-stroke-width:0.3px;color:#242426;">09/02/25, 12:01 PM</span>
<span class="t" style="left:1247.20px;top:752.30px;font-size:23.3px;letter-spacing:-0.10px;-webkit-text-stroke-width:0.3px;color:#242426;">JPEG image</span>
<svg class="b" style="left:494.9px;top:786.7px;" width="23.5" height="29.5" viewBox="0 0 23.5 29.5"><path d="M1.2 28.6 H21.8" stroke="#d6d6d6" stroke-width="1.2" opacity=".7"/><path d="M0.4 0.4 H13.8 L22.4 8.6 V28 H0.4Z" fill="#f5f5f5" stroke="#dadada" stroke-width="0.8"/><path d="M13.8 0.4 V8.6 H22.4Z" fill="#ffffff" stroke="#d4d4d4" stroke-width="0.7"/><rect x="4.2" y="5.6" width="14.2" height="15.2" rx="2.4" fill="#edf0f6" stroke="#cdd2db" stroke-width="0.6"/><rect x="6.3" y="8.4" width="10" height="5.6" fill="#9db8ec"/><rect x="5.9" y="13.4" width="11.4" height="2.5" rx="1" fill="#0c0c10"/><rect x="7.4" y="16.8" width="9.4" height="1.2" fill="#9aa0a8"/><rect x="13.6" y="16.2" width="4" height="3.4" fill="#7c848e"/><rect x="6.3" y="23" width="9.9" height="1.7" fill="#c2c2c2"/></svg>
<span class="t" style="left:532.00px;top:788.30px;font-size:23.3px;letter-spacing:1.33px;-webkit-text-stroke-width:0.3px;color:#242426;">reasons-Anytyp<span style="font-size:0.78em">…</span>tivity-app 3.jpg</span>
<span class="t" style="left:937.20px;top:788.30px;font-size:23.3px;letter-spacing:1.10px;-webkit-text-stroke-width:0.3px;color:#242426;">09/02/25, 5:32 PM</span>
<span class="t" style="left:1247.20px;top:788.30px;font-size:23.3px;letter-spacing:-0.10px;-webkit-text-stroke-width:0.3px;color:#242426;">JPEG image</span>
<svg class="b" style="left:494.9px;top:822.7px;" width="23.5" height="29.5" viewBox="0 0 23.5 29.5"><path d="M1.2 28.6 H21.8" stroke="#d6d6d6" stroke-width="1.2" opacity=".7"/><path d="M0.4 0.4 H13.8 L22.4 8.6 V28 H0.4Z" fill="#f5f5f5" stroke="#dadada" stroke-width="0.8"/><path d="M13.8 0.4 V8.6 H22.4Z" fill="#ffffff" stroke="#d4d4d4" stroke-width="0.7"/><rect x="4.2" y="5.6" width="14.2" height="15.2" rx="2.4" fill="#edf0f6" stroke="#cdd2db" stroke-width="0.6"/><rect x="6.3" y="8.4" width="10" height="5.6" fill="#9db8ec"/><rect x="5.9" y="13.4" width="11.4" height="2.5" rx="1" fill="#0c0c10"/><rect x="7.4" y="16.8" width="9.4" height="1.2" fill="#9aa0a8"/><rect x="13.6" y="16.2" width="4" height="3.4" fill="#7c848e"/><rect x="6.3" y="23" width="9.9" height="1.7" fill="#c2c2c2"/></svg>
<span class="t" style="left:532.00px;top:824.30px;font-size:23.3px;letter-spacing:1.34px;-webkit-text-stroke-width:0.3px;color:#242426;">reasons-Anytyp<span style="font-size:0.78em">…</span>tivity-app 4.jpg</span>
<span class="t" style="left:937.20px;top:824.30px;font-size:23.3px;letter-spacing:0.75px;-webkit-text-stroke-width:0.3px;color:#242426;">09/02/25, 12:01 PM</span>
<span class="t" style="left:1247.20px;top:824.30px;font-size:23.3px;letter-spacing:-0.10px;-webkit-text-stroke-width:0.3px;color:#242426;">JPEG image</span>
<svg class="b" style="left:494.9px;top:858.7px;" width="23.5" height="29.5" viewBox="0 0 23.5 29.5"><path d="M1.2 28.6 H21.8" stroke="#d6d6d6" stroke-width="1.2" opacity=".7"/><path d="M0.4 0.4 H13.8 L22.4 8.6 V28 H0.4Z" fill="#f5f5f5" stroke="#dadada" stroke-width="0.8"/><path d="M13.8 0.4 V8.6 H22.4Z" fill="#ffffff" stroke="#d4d4d4" stroke-width="0.7"/><rect x="4.2" y="5.6" width="14.2" height="15.2" rx="2.4" fill="#edf0f6" stroke="#cdd2db" stroke-width="0.6"/><rect x="6.3" y="8.4" width="10" height="5.6" fill="#9db8ec"/><rect x="5.9" y="13.4" width="11.4" height="2.5" rx="1" fill="#0c0c10"/><rect x="7.4" y="16.8" width="9.4" height="1.2" fill="#9aa0a8"/><rect x="13.6" y="16.2" width="4" height="3.4" fill="#7c848e"/><rect x="6.3" y="23" width="9.9" height="1.7" fill="#c2c2c2"/></svg>
<span class="t" style="left:532.00px;top:860.30px;font-size:23.3px;letter-spacing:1.33px;-webkit-text-stroke-width:0.3px;color:#242426;">reasons-Anytyp<span style="font-size:0.78em">…</span>tivity-app 5.jpg</span>
<span class="t" style="left:937.20px;top:860.30px;font-size:23.3px;letter-spacing:0.75px;-webkit-text-stroke-width:0.3px;color:#242426;">09/02/25, 12:01 PM</span>
<span class="t" style="left:1247.20px;top:860.30px;font-size:23.3px;letter-spacing:-0.10px;-webkit-text-stroke-width:0.3px;color:#242426;">JPEG image</span>
<svg class="b" style="left:494.9px;top:894.7px;" width="23.5" height="29.5" viewBox="0 0 23.5 29.5"><path d="M1.2 28.6 H21.8" stroke="#d6d6d6" stroke-width="1.2" opacity=".7"/><path d="M0.4 0.4 H13.8 L22.4 8.6 V28 H0.4Z" fill="#f5f5f5" stroke="#dadada" stroke-width="0.8"/><path d="M13.8 0.4 V8.6 H22.4Z" fill="#ffffff" stroke="#d4d4d4" stroke-width="0.7"/><rect x="4.2" y="5.6" width="14.2" height="15.2" rx="2.4" fill="#edf0f6" stroke="#cdd2db" stroke-width="0.6"/><rect x="6.3" y="8.4" width="10" height="5.6" fill="#9db8ec"/><rect x="5.9" y="13.4" width="11.4" height="2.5" rx="1" fill="#0c0c10"/><rect x="7.4" y="16.8" width="9.4" height="1.2" fill="#9aa0a8"/><rect x="13.6" y="16.2" width="4" height="3.4" fill="#7c848e"/><rect x="6.3" y="23" width="9.9" height="1.7" fill="#c2c2c2"/></svg>
<span class="t" style="left:532.00px;top:896.30px;font-size:23.3px;letter-spacing:1.34px;-webkit-text-stroke-width:0.3px;color:#242426;">reasons-Anytyp<span style="font-size:0.78em">…</span>tivity-app 6.jpg</span>
<span class="t" style="left:937.20px;top:896.30px;font-size:23.3px;letter-spacing:0.75px;-webkit-text-stroke-width:0.3px;color:#242426;">09/02/25, 12:01 PM</span>
<span class="t" style="left:1247.20px;top:896.30px;font-size:23.3px;letter-spacing:-0.10px;-webkit-text-stroke-width:0.3px;color:#242426;">JPEG image</span>
<svg class="b" style="left:494.9px;top:930.7px;" width="23.5" height="29.5" viewBox="0 0 23.5 29.5"><path d="M1.2 28.6 H21.8" stroke="#d6d6d6" stroke-width="1.2" opacity=".7"/><path d="M0.4 0.4 H13.8 L22.4 8.6 V28 H0.4Z" fill="#f5f5f5" stroke="#dadada" stroke-width="0.8"/><path d="M13.8 0.4 V8.6 H22.4Z" fill="#ffffff" stroke="#d4d4d4" stroke-width="0.7"/><rect x="4.2" y="5.6" width="14.2" height="15.2" rx="2.4" fill="#edf0f6" stroke="#cdd2db" stroke-width="0.6"/><rect x="6.3" y="8.4" width="10" height="5.6" fill="#9db8ec"/><rect x="5.9" y="13.4" width="11.4" height="2.5" rx="1" fill="#0c0c10"/><rect x="7.4" y="16.8" width="9.4" height="1.2" fill="#9aa0a8"/><rect x="13.6" y="16.2" width="4" height="3.4" fill="#7c848e"/><rect x="6.3" y="23" width="9.9" height="1.7" fill="#c2c2c2"/></svg>
<span class="t" style="left:532.00px;top:932.30px;font-size:23.3px;letter-spacing:1.22px;-webkit-text-stroke-width:0.3px;color:#242426;">reasons-Anytyp<span style="font-size:0.78em">…</span>tivity-app 7.jpg</span>
<span class="t" style="left:937.20px;top:932.30px;font-size:23.3px;letter-spacing:0.75px;-webkit-text-stroke-width:0.3px;color:#242426;">09/02/25, 12:01 PM</span>
<span class="t" style="left:1247.20px;top:932.30px;font-size:23.3px;letter-spacing:-0.10px;-webkit-text-stroke-width:0.3px;color:#242426;">JPEG image</span>
<svg class="b" style="left:419px;top:969.8px;" width="15" height="20" viewBox="0 0 15 20"><path d="M3.3 3.3 L11.3 9.8 L3.3 16.3" fill="none" stroke="#6f6f72" stroke-width="2.9" stroke-linecap="round" stroke-linejoin="round"/></svg>
<svg class="b" style="left:451.6px;top:967.0px;overflow:visible;" width="28.5" height="28.5" viewBox="0 0 28.5 28.5"><path d="M0.3 3 Q0.3 0.2 3.1 0.2 H9 Q10.4 0.2 11.2 1.3 L12.6 3 H25.6 Q28.2 3 28.2 5.6 V10 H0.3Z" fill="url(#fb)"/><path d="M0.2 7.9 Q0.2 5.7 2.4 5.7 H26.1 Q28.3 5.7 28.3 7.9 V24.6 Q28.3 26.8 26.1 26.8 H2.4 Q0.2 26.8 0.2 24.6Z" fill="#74c7f7"/><path d="M0.2 21.4 H28.3 V24.6 Q28.3 26.8 26.1 26.8 H2.4 Q0.2 26.8 0.2 24.6Z" fill="#63baee"/><path d="M0.2 23 H28.3 V24.6 Q28.3 26.8 26.1 26.8 H2.4 Q0.2 26.8 0.2 24.6Z" fill="#57aee6"/><rect x="0.5" y="5.7" width="27.5" height="1" rx="0.5" fill="#8dd6fb"/></svg>
<span class="t" style="left:491.80px;top:968.42px;font-size:23.0px;font-weight:700;letter-spacing:1.27px;-webkit-text-stroke-width:0.55px;color:#242426;">untitled folder</span>
<span class="t" style="left:936.20px;top:968.30px;font-size:23.3px;letter-spacing:1.00px;-webkit-text-stroke-width:0.3px;color:#242426;">25/01/25, 3:48 PM</span>
<span class="t" style="left:1246.20px;top:968.30px;font-size:23.3px;letter-spacing:0.80px;-webkit-text-stroke-width:0.3px;color:#242426;">Folder</span>
<svg class="b" style="left:419px;top:1005.8px;" width="15" height="20" viewBox="0 0 15 20"><path d="M3.3 3.3 L11.3 9.8 L3.3 16.3" fill="none" stroke="#6f6f72" stroke-width="2.9" stroke-linecap="round" stroke-linejoin="round"/></svg>
<svg class="b" style="left:451.6px;top:1003.0px;overflow:visible;" width="28.5" height="28.5" viewBox="0 0 28.5 28.5"><path d="M0.3 3 Q0.3 0.2 3.1 0.2 H9 Q10.4 0.2 11.2 1.3 L12.6 3 H25.6 Q28.2 3 28.2 5.6 V10 H0.3Z" fill="url(#fb)"/><path d="M0.2 7.9 Q0.2 5.7 2.4 5.7 H26.1 Q28.3 5.7 28.3 7.9 V24.6 Q28.3 26.8 26.1 26.8 H2.4 Q0.2 26.8 0.2 24.6Z" fill="#74c7f7"/><path d="M0.2 21.4 H28.3 V24.6 Q28.3 26.8 26.1 26.8 H2.4 Q0.2 26.8 0.2 24.6Z" fill="#63baee"/><path d="M0.2 23 H28.3 V24.6 Q28.3 26.8 26.1 26.8 H2.4 Q0.2 26.8 0.2 24.6Z" fill="#57aee6"/><rect x="0.5" y="5.7" width="27.5" height="1" rx="0.5" fill="#8dd6fb"/></svg>
<span class="t" style="left:491.80px;top:1004.42px;font-size:23.0px;font-weight:700;letter-spacing:1.34px;-webkit-text-stroke-width:0.55px;color:#242426;">untitled folder 2</span>
<span class="t" style="left:936.20px;top:1004.30px;font-size:23.3px;letter-spacing:1.03px;-webkit-text-stroke-width:0.3px;color:#242426;">29/01/25, 2:34 AM</span>
<span class="t" style="left:1246.20px;top:1004.30px;font-size:23.3px;letter-spacing:0.80px;-webkit-text-stroke-width:0.3px;color:#242426;">Folder</span>
<svg class="b" style="left:419px;top:1041.8px;" width="15" height="20" viewBox="0 0 15 20"><path d="M3.3 3.3 L11.3 9.8 L3.3 16.3" fill="none" stroke="#6f6f72" stroke-width="2.9" stroke-linecap="round" stroke-linejoin="round"/></svg>
<svg class="b" style="left:451.6px;top:1039.0px;overflow:visible;" width="28.5" height="28.5" viewBox="0 0 28.5 28.5"><path d="M0.3 3 Q0.3 0.2 3.1 0.2 H9 Q10.4 0.2 11.2 1.3 L12.6 3 H25.6 Q28.2 3 28.2 5.6 V10 H0.3Z" fill="url(#fb)"/><path d="M0.2 7.9 Q0.2 5.7 2.4 5.7 H26.1 Q28.3 5.7 28.3 7.9 V24.6 Q28.3 26.8 26.1 26.8 H2.4 Q0.2 26.8 0.2 24.6Z" fill="#74c7f7"/><path d="M0.2 21.4 H28.3 V24.6 Q28.3 26.8 26.1 26.8 H2.4 Q0.2 26.8 0.2 24.6Z" fill="#63baee"/><path d="M0.2 23 H28.3 V24.6 Q28.3 26.8 26.1 26.8 H2.4 Q0.2 26.8 0.2 24.6Z" fill="#57aee6"/><rect x="0.5" y="5.7" width="27.5" height="1" rx="0.5" fill="#8dd6fb"/></svg>
<span class="t" style="left:491.80px;top:1040.42px;font-size:23.0px;font-weight:700;letter-spacing:1.41px;-webkit-text-stroke-width:0.55px;color:#242426;">untitled folder 3</span>
<span class="t" style="left:937.20px;top:1040.30px;font-size:23.3px;letter-spacing:1.18px;-webkit-text-stroke-width:0.3px;color:#242426;">04/02/25, 2:39 PM</span>
<span class="t" style="left:1246.20px;top:1040.30px;font-size:23.3px;letter-spacing:0.80px;-webkit-text-stroke-width:0.3px;color:#242426;">Folder</span>
<svg class="b" style="left:455px;top:1074.7px;" width="23.5" height="29.5" viewBox="0 0 23.5 29.5"><path d="M1.2 28.6 H21.8" stroke="#d6d6d6" stroke-width="1.2" opacity=".7"/><path d="M0.4 0.4 H13.8 L22.4 8.6 V28 H0.4Z" fill="#f5f5f5" stroke="#dadada" stroke-width="0.8"/><path d="M13.8 0.4 V8.6 H22.4Z" fill="#ffffff" stroke="#d4d4d4" stroke-width="0.7"/><rect x="4.2" y="5.6" width="14.2" height="15.2" rx="2.4" fill="#edf0f6" stroke="#cdd2db" stroke-width="0.6"/><rect x="6.3" y="8.4" width="10" height="5.6" fill="#9db8ec"/><rect x="5.9" y="13.4" width="11.4" height="2.5" rx="1" fill="#0c0c10"/><rect x="7.4" y="16.8" width="9.4" height="1.2" fill="#9aa0a8"/><rect x="13.6" y="16.2" width="4" height="3.4" fill="#7c848e"/><rect x="6.3" y="23" width="9.9" height="1.7" fill="#c2c2c2"/></svg>
<span class="t" style="left:493.00px;top:1076.30px;font-size:23.3px;-webkit-text-stroke-width:0.3px;color:#242426;">1</span>
<span class="t" style="left:936.20px;top:1076.30px;font-size:23.3px;letter-spacing:0.70px;-webkit-text-stroke-width:0.3px;color:#242426;">20/01/25, 11:39 PM</span>
<span class="t" style="left:1247.20px;top:1076.30px;font-size:23.3px;letter-spacing:-0.10px;-webkit-text-stroke-width:0.3px;color:#242426;">JPEG image</span>
<svg class="b" style="left:455px;top:1110.7px;" width="23.5" height="29.5" viewBox="0 0 23.5 29.5"><path d="M1.2 28.6 H21.8" stroke="#d6d6d6" stroke-width="1.2" opacity=".7"/><path d="M0.4 0.4 H13.8 L22.4 8.6 V28 H0.4Z" fill="#f5f5f5" stroke="#dadada" stroke-width="0.8"/><path d="M13.8 0.4 V8.6 H22.4Z" fill="#ffffff" stroke="#d4d4d4" stroke-width="0.7"/><rect x="4.2" y="5.6" width="14.2" height="15.2" rx="2.4" fill="#edf0f6" stroke="#cdd2db" stroke-width="0.6"/><rect x="6.3" y="8.4" width="10" height="5.6" fill="#9db8ec"/><rect x="5.9" y="13.4" width="11.4" height="2.5" rx="1" fill="#0c0c10"/><rect x="7.4" y="16.8" width="9.4" height="1.2" fill="#9aa0a8"/><rect x="13.6" y="16.2" width="4" height="3.4" fill="#7c848e"/><rect x="6.3" y="23" width="9.9" height="1.7" fill="#c2c2c2"/></svg>
<span class="t" style="left:493.00px;top:1112.30px;font-size:23.3px;-webkit-text-stroke-width:0.3px;color:#242426;">2</span>
<span class="t" style="left:936.20px;top:1112.30px;font-size:23.3px;letter-spacing:0.70px;-webkit-text-stroke-width:0.3px;color:#242426;">20/01/25, 11:39 PM</span>
<span class="t" style="left:1247.20px;top:1112.30px;font-size:23.3px;letter-spacing:-0.10px;-webkit-text-stroke-width:0.3px;color:#242426;">JPEG image</span>
</div></div>
<div class="b" style="left:1357px;top:135.6px;width:1.6px;height:999px;background:#e8e8e9;"></div>
<svg class="b" style="left:1379.8px;top:246.9px;overflow:visible;" width="28.5" height="28.5" viewBox="0 0 28.5 28.5"><path d="M0.3 3 Q0.3 0.2 3.1 0.2 H9 Q10.4 0.2 11.2 1.3 L12.6 3 H25.6 Q28.2 3 28.2 5.6 V10 H0.3Z" fill="url(#fb)"/><path d="M0.2 7.9 Q0.2 5.7 2.4 5.7 H26.1 Q28.3 5.7 28.3 7.9 V24.6 Q28.3 26.8 26.1 26.8 H2.4 Q0.2 26.8 0.2 24.6Z" fill="#74c7f7"/><path d="M0.2 21.4 H28.3 V24.6 Q28.3 26.8 26.1 26.8 H2.4 Q0.2 26.8 0.2 24.6Z" fill="#63baee"/><path d="M0.2 23 H28.3 V24.6 Q28.3 26.8 26.1 26.8 H2.4 Q0.2 26.8 0.2 24.6Z" fill="#57aee6"/><rect x="0.5" y="5.7" width="27.5" height="1" rx="0.5" fill="#8dd6fb"/><path d="M12.6 11.2 L16.6 18.4 M15.6 11.2 L11 19.4 M9.6 17 H18.6" fill="none" stroke="#4c9fdc" stroke-width="1.1" stroke-linecap="round"/></svg>
<span class="t" style="left:1421.30px;top:248.42px;font-size:23.0px;font-weight:700;letter-spacing:1.06px;-webkit-text-stroke-width:0.55px;color:#242426;">Applications</span>
<svg class="b" style="left:1379.8px;top:282.9px;overflow:visible;" width="28.5" height="28.5" viewBox="0 0 28.5 28.5"><path d="M0.3 3 Q0.3 0.2 3.1 0.2 H9 Q10.4 0.2 11.2 1.3 L12.6 3 H25.6 Q28.2 3 28.2 5.6 V10 H0.3Z" fill="url(#fb)"/><path d="M0.2 7.9 Q0.2 5.7 2.4 5.7 H26.1 Q28.3 5.7 28.3 7.9 V24.6 Q28.3 26.8 26.1 26.8 H2.4 Q0.2 26.8 0.2 24.6Z" fill="#74c7f7"/><path d="M0.2 21.4 H28.3 V24.6 Q28.3 26.8 26.1 26.8 H2.4 Q0.2 26.8 0.2 24.6Z" fill="#63baee"/><path d="M0.2 23 H28.3 V24.6 Q28.3 26.8 26.1 26.8 H2.4 Q0.2 26.8 0.2 24.6Z" fill="#57aee6"/><rect x="0.5" y="5.7" width="27.5" height="1" rx="0.5" fill="#8dd6fb"/></svg>
<span class="t" style="left:1421.30px;top:284.42px;font-size:23.0px;font-weight:700;letter-spacing:1.18px;-webkit-text-stroke-width:0.55px;color:#242426;">Creative Cloud<span style="font-size:0.78em">…</span>5FCE@AdobeID</span>
<svg class="b" style="left:1379.8px;top:318.9px;overflow:visible;" width="28.5" height="28.5" viewBox="0 0 28.5 28.5"><path d="M0.3 3 Q0.3 0.2 3.1 0.2 H9 Q10.4 0.2 11.2 1.3 L12.6 3 H25.6 Q28.2 3 28.2 5.6 V10 H0.3Z" fill="url(#fb)"/><path d="M0.2 7.9 Q0.2 5.7 2.4 5.7 H26.1 Q28.3 5.7 28.3 7.9 V24.6 Q28.3 26.8 26.1 26.8 H2.4 Q0.2 26.8 0.2 24.6Z" fill="#74c7f7"/><path d="M0.2 21.4 H28.3 V24.6 Q28.3 26.8 26.1 26.8 H2.4 Q0.2 26.8 0.2 24.6Z" fill="#63baee"/><path d="M0.2 23 H28.3 V24.6 Q28.3 26.8 26.1 26.8 H2.4 Q0.2 26.8 0.2 24.6Z" fill="#57aee6"/><rect x="0.5" y="5.7" width="27.5" height="1" rx="0.5" fill="#8dd6fb"/><rect x="9" y="11.2" width="10.4" height="7.8" rx="1" fill="none" stroke="#4c9fdc" stroke-width="1"/><rect x="11" y="15.8" width="6.4" height="1.6" fill="#4c9fdc"/></svg>
<span class="t" style="left:1420.30px;top:320.42px;font-size:23.0px;font-weight:700;letter-spacing:1.40px;-webkit-text-stroke-width:0.55px;color:#242426;">Desktop</span>
<svg class="b" style="left:1379.8px;top:354.9px;overflow:visible;" width="28.5" height="28.5" viewBox="0 0 28.5 28.5"><path d="M0.3 3 Q0.3 0.2 3.1 0.2 H9 Q10.4 0.2 11.2 1.3 L12.6 3 H25.6 Q28.2 3 28.2 5.6 V10 H0.3Z" fill="url(#fb)"/><path d="M0.2 7.9 Q0.2 5.7 2.4 5.7 H26.1 Q28.3 5.7 28.3 7.9 V24.6 Q28.3 26.8 26.1 26.8 H2.4 Q0.2 26.8 0.2 24.6Z" fill="#74c7f7"/><path d="M0.2 21.4 H28.3 V24.6 Q28.3 26.8 26.1 26.8 H2.4 Q0.2 26.8 0.2 24.6Z" fill="#63baee"/><path d="M0.2 23 H28.3 V24.6 Q28.3 26.8 26.1 26.8 H2.4 Q0.2 26.8 0.2 24.6Z" fill="#57aee6"/><rect x="0.5" y="5.7" width="27.5" height="1" rx="0.5" fill="#8dd6fb"/><path d="M11.2 10.6 H15 L17.8 13.4 V19.6 H11.2Z M15 10.6 V13.4 H17.8" fill="none" stroke="#4c9fdc" stroke-width="1" stroke-linejoin="round"/></svg>
<span class="t" style="left:1420.30px;top:356.42px;font-size:23.0px;font-weight:700;letter-spacing:1.41px;-webkit-text-stroke-width:0.55px;color:#242426;">Documents</span>
<svg class="b" style="left:1379.8px;top:390.9px;overflow:visible;" width="28.5" height="28.5" viewBox="0 0 28.5 28.5"><path d="M0.3 3 Q0.3 0.2 3.1 0.2 H9 Q10.4 0.2 11.2 1.3 L12.6 3 H25.6 Q28.2 3 28.2 5.6 V10 H0.3Z" fill="url(#fb)"/><path d="M0.2 7.9 Q0.2 5.7 2.4 5.7 H26.1 Q28.3 5.7 28.3 7.9 V24.6 Q28.3 26.8 26.1 26.8 H2.4 Q0.2 26.8 0.2 24.6Z" fill="#74c7f7"/><path d="M0.2 21.4 H28.3 V24.6 Q28.3 26.8 26.1 26.8 H2.4 Q0.2 26.8 0.2 24.6Z" fill="#63baee"/><path d="M0.2 23 H28.3 V24.6 Q28.3 26.8 26.1 26.8 H2.4 Q0.2 26.8 0.2 24.6Z" fill="#57aee6"/><rect x="0.5" y="5.7" width="27.5" height="1" rx="0.5" fill="#8dd6fb"/><circle cx="14.3" cy="15" r="4.3" fill="#4c9fdc"/><path d="M14.3 12.6 V17 M12.5 15.4 L14.3 17.2 L16.1 15.4" fill="none" stroke="#7cc9f6" stroke-width="1.1" stroke-linecap="round" stroke-linejoin="round"/></svg>
<span class="t" style="left:1420.30px;top:392.42px;font-size:23.0px;font-weight:700;letter-spacing:1.23px;-webkit-text-stroke-width:0.55px;color:#242426;">Downloads</span>
<svg class="b" style="left:1379.8px;top:426.9px;overflow:visible;" width="28.5" height="28.5" viewBox="0 0 28.5 28.5"><path d="M0.3 3 Q0.3 0.2 3.1 0.2 H9 Q10.4 0.2 11.2 1.3 L12.6 3 H25.6 Q28.2 3 28.2 5.6 V10 H0.3Z" fill="url(#fb)"/><path d="M0.2 7.9 Q0.2 5.7 2.4 5.7 H26.1 Q28.3 5.7 28.3 7.9 V24.6 Q28.3 26.8 26.1 26.8 H2.4 Q0.2 26.8 0.2 24.6Z" fill="#74c7f7"/><path d="M0.2 21.4 H28.3 V24.6 Q28.3 26.8 26.1 26.8 H2.4 Q0.2 26.8 0.2 24.6Z" fill="#63baee"/><path d="M0.2 23 H28.3 V24.6 Q28.3 26.8 26.1 26.8 H2.4 Q0.2 26.8 0.2 24.6Z" fill="#57aee6"/><rect x="0.5" y="5.7" width="27.5" height="1" rx="0.5" fill="#8dd6fb"/></svg>
<span class="t" style="left:1421.30px;top:428.42px;font-size:23.0px;font-weight:700;letter-spacing:0.92px;-webkit-text-stroke-width:0.55px;color:#242426;">JoplinBackup</span>
<svg class="b" style="left:1379.8px;top:462.9px;overflow:visible;" width="28.5" height="28.5" viewBox="0 0 28.5 28.5"><path d="M0.3 3 Q0.3 0.2 3.1 0.2 H9 Q10.4 0.2 11.2 1.3 L12.6 3 H25.6 Q28.2 3 28.2 5.6 V10 H0.3Z" fill="url(#fb)"/><path d="M0.2 7.9 Q0.2 5.7 2.4 5.7 H26.1 Q28.3 5.7 28.3 7.9 V24.6 Q28.3 26.8 26.1 26.8 H2.4 Q0.2 26.8 0.2 24.6Z" fill="#74c7f7"/><path d="M0.2 21.4 H28.3 V24.6 Q28.3 26.8 26.1 26.8 H2.4 Q0.2 26.8 0.2 24.6Z" fill="#63baee"/><path d="M0.2 23 H28.3 V24.6 Q28.3 26.8 26.1 26.8 H2.4 Q0.2 26.8 0.2 24.6Z" fill="#57aee6"/><rect x="0.5" y="5.7" width="27.5" height="1" rx="0.5" fill="#8dd6fb"/><rect x="9.2" y="10.8" width="10.2" height="8.4" rx="1" fill="none" stroke="#4c9fdc" stroke-width="1"/><path d="M11.4 10.8 V19.2 M17.2 10.8 V19.2 M11.4 15 H17.2" stroke="#4c9fdc" stroke-width="0.9"/></svg>
<span class="t" style="left:1420.30px;top:464.42px;font-size:23.0px;font-weight:700;letter-spacing:1.30px;-webkit-text-stroke-width:0.55px;color:#242426;">Movies</span>
<svg class="b" style="left:1379.8px;top:498.9px;overflow:visible;" width="28.5" height="28.5" viewBox="0 0 28.5 28.5"><path d="M0.3 3 Q0.3 0.2 3.1 0.2 H9 Q10.4 0.2 11.2 1.3 L12.6 3 H25.6 Q28.2 3 28.2 5.6 V10 H0.3Z" fill="url(#fb)"/><path d="M0.2 7.9 Q0.2 5.7 2.4 5.7 H26.1 Q28.3 5.7 28.3 7.9 V24.6 Q28.3 26.8 26.1 26.8 H2.4 Q0.2 26.8 0.2 24.6Z" fill="#74c7f7"/><path d="M0.2 21.4 H28.3 V24.6 Q28.3 26.8 26.1 26.8 H2.4 Q0.2 26.8 0.2 24.6Z" fill="#63baee"/><path d="M0.2 23 H28.3 V24.6 Q28.3 26.8 26.1 26.8 H2.4 Q0.2 26.8 0.2 24.6Z" fill="#57aee6"/><rect x="0.5" y="5.7" width="27.5" height="1" rx="0.5" fill="#8dd6fb"/><path d="M12.4 17.8 V11.8 L17.4 10.8 V16.8" fill="none" stroke="#4c9fdc" stroke-width="1"/><ellipse cx="11.4" cy="17.9" rx="1.3" ry="1.1" fill="#4c9fdc"/><ellipse cx="16.4" cy="16.9" rx="1.3" ry="1.1" fill="#4c9fdc"/></svg>
<span class="t" style="left:1420.30px;top:500.42px;font-size:23.0px;font-weight:700;letter-spacing:1.23px;-webkit-text-stroke-width:0.55px;color:#242426;">Music</span>
<svg class="b" style="left:1379.8px;top:534.9px;overflow:visible;" width="28.5" height="28.5" viewBox="0 0 28.5 28.5"><path d="M0.3 3 Q0.3 0.2 3.1 0.2 H9 Q10.4 0.2 11.2 1.3 L12.6 3 H25.6 Q28.2 3 28.2 5.6 V10 H0.3Z" fill="url(#fb)"/><path d="M0.2 7.9 Q0.2 5.7 2.4 5.7 H26.1 Q28.3 5.7 28.3 7.9 V24.6 Q28.3 26.8 26.1 26.8 H2.4 Q0.2 26.8 0.2 24.6Z" fill="#74c7f7"/><path d="M0.2 21.4 H28.3 V24.6 Q28.3 26.8 26.1 26.8 H2.4 Q0.2 26.8 0.2 24.6Z" fill="#63baee"/><path d="M0.2 23 H28.3 V24.6 Q28.3 26.8 26.1 26.8 H2.4 Q0.2 26.8 0.2 24.6Z" fill="#57aee6"/><rect x="0.5" y="5.7" width="27.5" height="1" rx="0.5" fill="#8dd6fb"/><rect x="-1.1" y="21.6" width="5.2" height="6.4" fill="#fff" stroke="#222" stroke-width="0.7"/><path d="M0.2 26.6 Q0.6 24 3 23.6 M1.4 22.9 H3.4 V25" fill="none" stroke="#111" stroke-width="1.1"/></svg>
<span class="t" style="left:1420.30px;top:536.42px;font-size:23.0px;font-weight:700;font-style:italic;letter-spacing:1.20px;-webkit-text-stroke-width:0.55px;color:#242426;">OneDrive</span>
<svg class="b" style="left:1379.8px;top:570.9px;overflow:visible;" width="28.5" height="28.5" viewBox="0 0 28.5 28.5"><path d="M0.3 3 Q0.3 0.2 3.1 0.2 H9 Q10.4 0.2 11.2 1.3 L12.6 3 H25.6 Q28.2 3 28.2 5.6 V10 H0.3Z" fill="url(#fb)"/><path d="M0.2 7.9 Q0.2 5.7 2.4 5.7 H26.1 Q28.3 5.7 28.3 7.9 V24.6 Q28.3 26.8 26.1 26.8 H2.4 Q0.2 26.8 0.2 24.6Z" fill="#74c7f7"/><path d="M0.2 21.4 H28.3 V24.6 Q28.3 26.8 26.1 26.8 H2.4 Q0.2 26.8 0.2 24.6Z" fill="#63baee"/><path d="M0.2 23 H28.3 V24.6 Q28.3 26.8 26.1 26.8 H2.4 Q0.2 26.8 0.2 24.6Z" fill="#57aee6"/><rect x="0.5" y="5.7" width="27.5" height="1" rx="0.5" fill="#8dd6fb"/><rect x="9.2" y="11" width="10.2" height="8" rx="1" fill="none" stroke="#4c9fdc" stroke-width="1"/><path d="M10 18 L13 14.6 L15.2 16.8 L16.6 15.6 L18.8 18Z" fill="#4c9fdc"/><circle cx="12" cy="13.2" r="0.9" fill="#4c9fdc"/></svg>
<span class="t" style="left:1420.30px;top:572.42px;font-size:23.0px;font-weight:700;letter-spacing:1.30px;-webkit-text-stroke-width:0.55px;color:#242426;">Pictures</span>
<svg class="b" style="left:1379.8px;top:606.9px;overflow:visible;" width="28.5" height="28.5" viewBox="0 0 28.5 28.5"><path d="M0.3 3 Q0.3 0.2 3.1 0.2 H9 Q10.4 0.2 11.2 1.3 L12.6 3 H25.6 Q28.2 3 28.2 5.6 V10 H0.3Z" fill="url(#fb)"/><path d="M0.2 7.9 Q0.2 5.7 2.4 5.7 H26.1 Q28.3 5.7 28.3 7.9 V24.6 Q28.3 26.8 26.1 26.8 H2.4 Q0.2 26.8 0.2 24.6Z" fill="#74c7f7"/><path d="M0.2 21.4 H28.3 V24.6 Q28.3 26.8 26.1 26.8 H2.4 Q0.2 26.8 0.2 24.6Z" fill="#63baee"/><path d="M0.2 23 H28.3 V24.6 Q28.3 26.8 26.1 26.8 H2.4 Q0.2 26.8 0.2 24.6Z" fill="#57aee6"/><rect x="0.5" y="5.7" width="27.5" height="1" rx="0.5" fill="#8dd6fb"/><path d="M14.3 10 L19.4 15.1 L14.3 20.2 L9.2 15.1Z" fill="none" stroke="#4c9fdc" stroke-width="1" stroke-linejoin="round"/><circle cx="14.3" cy="13.2" r="0.8" fill="#4c9fdc"/><path d="M14.3 14.6 V17.6" stroke="#4c9fdc" stroke-width="1"/></svg>
<span class="t" style="left:1420.30px;top:608.42px;font-size:23.0px;font-weight:700;letter-spacing:0.94px;-webkit-text-stroke-width:0.55px;color:#242426;">Public</span>
<svg class="b" style="left:1379.8px;top:642.9px;overflow:visible;" width="28.5" height="28.5" viewBox="0 0 28.5 28.5"><path d="M0.3 3 Q0.3 0.2 3.1 0.2 H9 Q10.4 0.2 11.2 1.3 L12.6 3 H25.6 Q28.2 3 28.2 5.6 V10 H0.3Z" fill="url(#fb)"/><path d="M0.2 7.9 Q0.2 5.7 2.4 5.7 H26.1 Q28.3 5.7 28.3 7.9 V24.6 Q28.3 26.8 26.1 26.8 H2.4 Q0.2 26.8 0.2 24.6Z" fill="#74c7f7"/><path d="M0.2 21.4 H28.3 V24.6 Q28.3 26.8 26.1 26.8 H2.4 Q0.2 26.8 0.2 24.6Z" fill="#63baee"/><path d="M0.2 23 H28.3 V24.6 Q28.3 26.8 26.1 26.8 H2.4 Q0.2 26.8 0.2 24.6Z" fill="#57aee6"/><rect x="0.5" y="5.7" width="27.5" height="1" rx="0.5" fill="#8dd6fb"/></svg>
<span class="t" style="left:1421.30px;top:644.42px;font-size:23.0px;font-weight:700;letter-spacing:1.15px;-webkit-text-stroke-width:0.55px;color:#242426;">Standard Notes Backups</span>
<svg class="b" style="left:1600px;top:1040px;" width="200" height="70" viewBox="0 0 200 70"><defs><filter id="ds" x="-20%" y="-20%" width="150%" height="160%"><feGaussianBlur in="SourceAlpha" stdDeviation="2.3"/><feOffset dx="1.6" dy="2"/><feComponentTransfer><feFuncA type="linear" slope="0.7"/></feComponentTransfer><feMerge><feMergeNode/><feMergeNode in="SourceGraphic"/></feMerge></filter></defs><g filter="url(#ds)"><path d="M14.9 8.7 H31 V14.3 H21.8 V39.2 H31 V57.8 L23.6 44.8 H14.9Z" fill="#f48fa8"/><path d="M39 8.7 H54.7 V44.8 H39 V39.2 H47.8 V14.3 H39Z" fill="#8ed0f4"/><path d="M64.7 8.7 H73.6 L82.8 21.4 L92 8.7 H100.8 L87.2 26.8 L100.8 44.8 H92 L82.8 32.2 L73.6 44.8 H64.7 L78.4 26.8Z" fill="#ffffff"/><path d="M105.7 8.7 H136 Q141.8 8.7 141.8 14.5 V39 Q141.8 44.8 136 44.8 H105.7Z M112.5 15.5 V38 H135 V15.5Z" fill="#ffffff" fill-rule="evenodd"/><path d="M146 14.5 Q146 8.7 151.8 8.7 H182.3 V44.8 H175.5 V33 H152.8 V44.8 H146Z M152.8 15.5 V26.8 H175.5 V15.5Z" fill="#ffffff" fill-rule="evenodd"/></g></svg>
</div>
</body></html>
